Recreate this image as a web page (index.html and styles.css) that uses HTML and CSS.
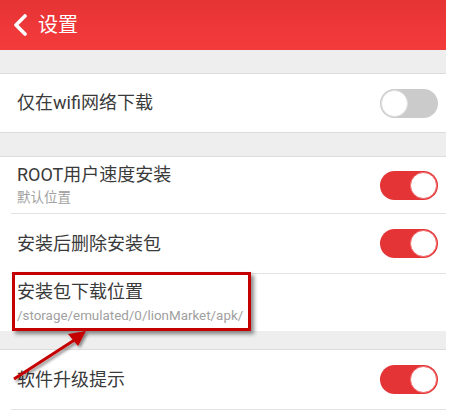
FILE: index.html
```html
<!DOCTYPE html>
<html lang="zh">
<head>
<meta charset="utf-8">
<title>设置</title>
<link rel="stylesheet" href="styles.css">
</head>
<body>
<div class="screen">
  <header class="appbar">
    <svg class="back" width="16" height="22" viewBox="0 0 16 22"><path d="M13 2 L4 11 L13 20" fill="none" stroke="#fff" stroke-width="3.6" stroke-linecap="round" stroke-linejoin="round"/></svg>
    <span class="appbar-title">设置</span>
  </header>
  <div class="band band-top"></div>
  <section class="group">
    <div class="row h58">
      <div class="label"><div class="title">仅在wifi网络下载</div></div>
      <span class="switch off"><span class="knob"></span></span>
    </div>
  </section>
  <div class="band band-mid"></div>
  <section class="group">
    <div class="row h56 line">
      <div class="label"><div class="title">ROOT用户速度安装</div><div class="sub">默认位置</div></div>
      <span class="switch on"><span class="knob"></span></span>
    </div>
    <div class="row h59 line">
      <div class="label"><div class="title">安装后删除安装包</div></div>
      <span class="switch on"><span class="knob"></span></span>
    </div>
    <div class="row h57 marked">
      <div class="label"><div class="title">安装包下载位置</div><div class="sub path">/storage/emulated/0/lionMarket/apk/</div></div>
      <span class="callout"></span>
    </div>
  </section>
  <div class="band band-low"></div>
  <section class="group">
    <div class="row h59 line">
      <div class="label"><div class="title">软件升级提示</div></div>
      <span class="switch on"><span class="knob"></span></span>
    </div>
  </section>
  <svg class="arrow" width="450" height="412" viewBox="0 0 450 412">
    <defs>
      <filter id="sh" x="-20%" y="-20%" width="140%" height="140%">
        <feDropShadow dx="2" dy="2" stdDeviation="1.5" flood-color="#000" flood-opacity="0.45"/>
      </filter>
    </defs>
    <g filter="url(#sh)">
      <line x1="14" y1="379" x2="76" y2="339" stroke="#c40000" stroke-width="3"/>
      <polygon points="86,331 68,334 78,346" fill="#c40000"/>
    </g>
  </svg>
</div>
</body>
</html>
```
FILE: styles.css
```css
html, body {
  margin: 0;
  padding: 0;
  background: #fff;
}
.screen {
  position: relative;
  width: 446px;
  height: 412px;
  overflow: hidden;
  font-family: Roboto, "Noto Sans CJK SC", sans-serif;
  color: #3a3a3a;
}
.appbar {
  height: 50px;
  display: flex;
  align-items: center;
  padding-left: 12px;
  background: linear-gradient(#e63334, #f43b3c);
  color: #fff;
}
.back {
  display: block;
  margin-right: 10px;
}
.appbar-title {
  font-size: 20px;
  line-height: 1;
  margin-top: -1px;
}
.band {
  background: #eeeeee;
  border-bottom: 1px solid #dcdcdc;
}
.band-top { height: 23px; }
.band-mid { height: 23px; border-top: 1px solid #dcdcdc; }
.band-low { height: 18px; }
.group {
  background: #fff;
}
.row {
  position: relative;
  display: flex;
  align-items: center;
  justify-content: space-between;
  margin-left: 11px;
  padding: 0 8px 0 6px;
}
.row.line { border-bottom: 1px solid #e2e2e2; }
.h56 { height: 56px; }
.h57 { height: 57px; }
.h58 { height: 58px; }
.h59 { height: 59px; }
.title {
  font-size: 18px;
  line-height: 22px;
}
.sub {
  font-size: 13.5px;
  line-height: 17px;
  color: #a0a0a0;
  margin-top: 3px;
}
.sub.path {
  font-size: 13.4px;
  margin-top: 4px;
}
.switch {
  position: relative;
  display: block;
  width: 58px;
  height: 29px;
  border-radius: 15px;
  box-sizing: border-box;
}
.switch.off { background: #cbcbcb; }
.switch.on { background: #e53435; }
.knob {
  position: absolute;
  top: 1px;
  width: 27px;
  height: 27px;
  border-radius: 50%;
  background: #fff;
  box-sizing: border-box;
}
.switch.off .knob { left: 1px; border: 1px solid #e0e0e0; }
.switch.on .knob { right: 1px; border: 1px solid #f06a6a; }
.callout {
  position: absolute;
  left: 1px;
  top: -2px;
  width: 239px;
  height: 59px;
  border: 3px solid #c40000;
  box-sizing: border-box;
  box-shadow: 3px 3px 4px rgba(0, 0, 0, 0.45);
}
.arrow {
  position: absolute;
  left: 0;
  top: 0;
  pointer-events: none;
}
```
